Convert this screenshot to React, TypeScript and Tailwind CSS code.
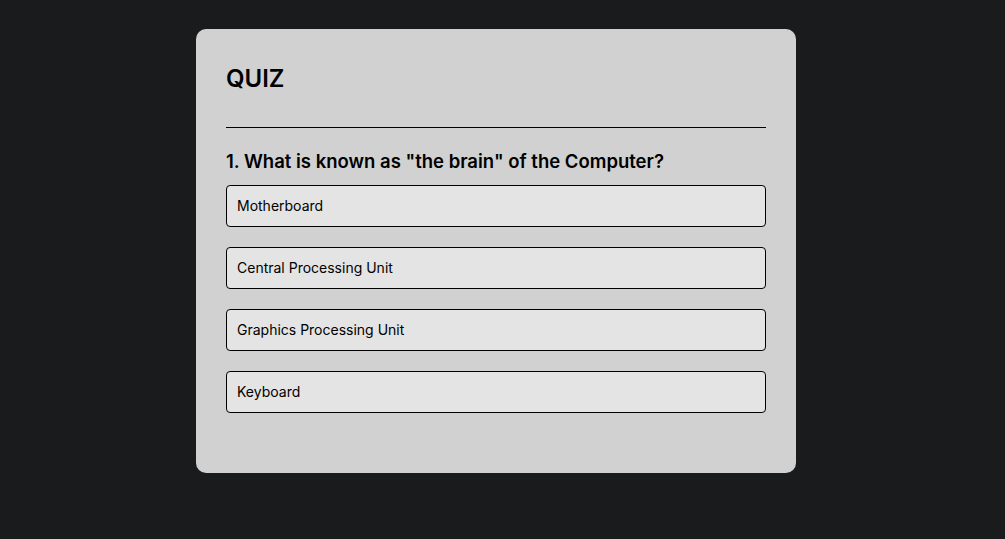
const options = [
  "Motherboard",
  "Central Processing Unit",
  "Graphics Processing Unit",
  "Keyboard",
];

export default function App() {
  return (
    <div
      className="min-h-[539px] w-full bg-[#1a1b1d] pt-[29px]"
      style={{ fontFamily: "Inter, 'Open Sans', sans-serif" }}
    >
      <div className="ml-[196px] w-[600px] rounded-[10px] bg-[#d1d1d1] px-[30px] pt-[30px] pb-[60px] text-black">
        <h1 className="text-[24px] leading-[40px] font-semibold">QUIZ</h1>
        <hr className="mt-[28px] border-t border-black" />
        <h2 className="mt-[20px] text-[18.5px] leading-[27px] font-semibold">
          1. What is known as "the brain" of the Computer?
        </h2>
        <ul className="mt-[10px] flex flex-col gap-[20px]">
          {options.map((o) => (
            <li
              key={o}
              className="flex h-[42px] items-center rounded-[4px] border border-black bg-[#e4e4e4] px-[10px] pb-[2px] text-[14px]"
            >
              {o}
            </li>
          ))}
        </ul>
      </div>
    </div>
  );
}
